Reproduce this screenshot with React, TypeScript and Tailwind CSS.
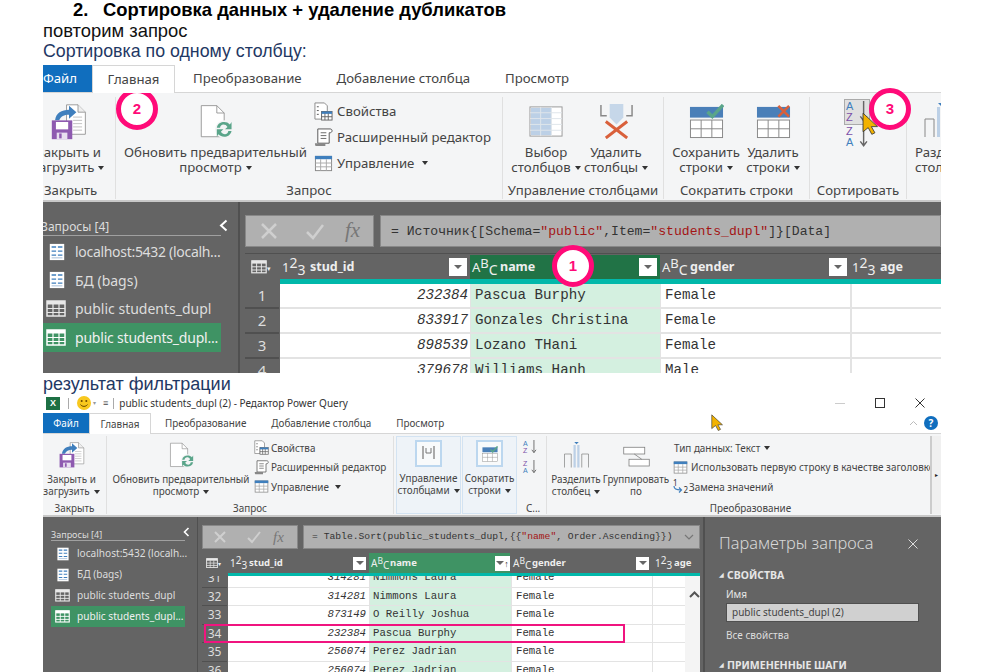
import React from "react";

type IP = { s?: number };
const SaveIcon = ({ s = 44 }: IP) => (
  <svg className="shrink-0" width={s} height={s} viewBox="0 0 44 44" fill="none">
    <path d="M19 1h14l9 9v27H19z" fill="#fff" stroke="#8a8a8a" />
    <path d="M33 1v9h9" stroke="#8a8a8a" fill="#eee" />
    <path d="M27 16h11M27 20h11M27 24h11M27 28h11M27 32h11" stroke="#b5b5b5" />
    <path d="M5 20C6 11 13 7 22 7V2l9 8-9 8v-5c-6 0-10 2-12 7z" fill="#3f7fbd" />
    <rect x="1" y="20" width="25" height="23" fill="#8e5ab0" />
    <rect x="6" y="22" width="15" height="9" fill="#fff" />
    <rect x="7" y="35" width="13" height="8" fill="#e8dff0" />
    <rect x="10" y="36" width="3" height="6" fill="#8e5ab0" />
  </svg>
);
const RefreshIcon = ({ s = 44 }: IP) => (
  <svg className="shrink-0" width={s} height={s} viewBox="0 0 44 44" fill="none">
    <path d="M4 2h19l9 9v29H4z" fill="#fff" stroke="#8a8a8a" />
    <path d="M23 2v9h9" stroke="#8a8a8a" />
    <circle cx="32" cy="31" r="11" fill="#f3f4f5" />
    <path d="M23 29c1-5 5-7 9-7 3 0 5 1 7 3l2-3v9h-8l3-3c-1-2-3-3-5-3-2 0-4 2-4 4z" fill="#5aa58a" />
    <path d="M41 33c-1 5-5 7-9 7-3 0-5-1-7-3l-2 3v-9h8l-3 3c1 2 3 3 5 3 2 0 4-2 4-4z" fill="#5aa58a" />
  </svg>
);
const PropsIcon = ({ s = 20 }: IP) => (
  <svg className="shrink-0" width={s} height={s} viewBox="0 0 20 20" fill="none">
    <path d="M1 1h10l3 3v6H8v8H1z" fill="#fff" stroke="#8a8a8a" />
    <path d="M3 5h2M3 9h2M3 13h2" stroke="#555" />
    <rect x="8" y="10" width="11" height="9" fill="#fff" stroke="#666" />
    <path d="M8 10h11v2.500H8z" fill="#3f7fbd" />
    <path d="M8 15.500h11M11.500 12v7M15 12v7" stroke="#666" />
  </svg>
);
const ScrollIcon = ({ s = 20 }: IP) => (
  <svg className="shrink-0" width={s} height={s} viewBox="0 0 20 20" fill="none">
    <path d="M4 1h13c1.500 0 2 1 2 2s-1 2-2 2h-1v11H4z" fill="#fff" stroke="#555" />
    <path d="M7 5h6M7 8h6M7 11h6" stroke="#666" />
    <path d="M1 16h11v3H2c-1 0-1-3-1-3z" fill="#888" />
  </svg>
);
const ManageIcon = ({ s = 20 }: IP) => (
  <svg className="shrink-0" width={s} height={s} viewBox="0 0 20 20" fill="none">
    <rect x="1.500" y="2.500" width="17" height="15" fill="#fff" stroke="#888" />
    <rect x="1" y="2" width="18" height="3.500" fill="#3f7fbd" />
    <path d="M1.500 9.500h17M1.500 13.500h17M7 5.500v12M13 5.500v12" stroke="#aaa" />
  </svg>
);
const ChooseIcon = ({ s = 36 }: IP) => (
  <svg className="shrink-0" width={s} height={s} viewBox="0 0 36 36" fill="none">
    <rect x="1" y="3" width="33" height="30" fill="#fff" stroke="#999" />
    <rect x="2" y="4" width="21" height="28" fill="#bcd0e6" />
    <path d="M1 9h33M1 15h33M1 21h33M1 27h33M12 3v30M23 3v30" stroke="#dfe5ea" />
  </svg>
);
const RemoveColIcon = ({ s = 36 }: IP) => (
  <svg className="shrink-0" width={s} height={s} viewBox="0 0 36 36" fill="none">
    <path d="M2 1v11h6M34 1v11h-6" stroke="#888" strokeWidth="1.500" />
    <path d="M11 0h14v14l-7 7-7-7z" fill="#c6d7e9" />
    <path d="M7 18l22 17M29 18L7 35" stroke="#d9603b" strokeWidth="3" />
  </svg>
);
const KeepIcon = ({ s = 36, x = false }: IP & { x?: boolean }) => (
  <svg className="shrink-0" width={s} height={s} viewBox="0 0 36 36" fill="none">
    <rect x="1" y="3" width="34" height="11" fill="#4a7fb8" />
    <rect x="1.500" y="16.500" width="33" height="18" fill="#fff" stroke="#888" />
    <path d="M1.500 25.500h33M12.500 16.500v18M23.500 16.500v18" stroke="#888" />
    {x ? (
      <path d="M23 2l11 11M34 2L23 13" stroke="#d9603b" strokeWidth="2.600" />
    ) : (
      <path d="M19 8l5 5 11-12" stroke="#5aa58a" strokeWidth="3.500" />
    )}
  </svg>
);
const SplitIcon = ({ s = 36 }: IP) => (
  <svg className="shrink-0" width={s} height={s} viewBox="0 0 36 36" fill="none">
    <path d="M2 34V16h9v18M34 34V16h-9v18" stroke="#888" />
    <rect x="14" y="4" width="3" height="30" fill="#bcd0e6" />
    <rect x="19" y="4" width="3" height="30" fill="#bcd0e6" />
    <path d="M15 0h6l-3 3z" fill="#3f7fbd" />
  </svg>
);
const GroupIcon = ({ s = 36 }: IP) => (
  <svg className="shrink-0" width={s} height={s} viewBox="0 0 36 30" fill="none">
    <rect x="1" y="4" width="28" height="9" fill="#fff" stroke="#777" />
    <rect x="8" y="20" width="27" height="9" fill="#fff" stroke="#777" />
    <path d="M15 13l10 7" stroke="#777" />
  </svg>
);
const SortPair = ({ down, s = 20 }: IP & { down?: boolean }) => (
  <div className="relative font-['Liberation_Sans',sans-serif]" style={{ width: s, height: s }}>
    <div className="flex flex-col items-start" style={{ fontSize: s * 0.5, lineHeight: s * 0.5 + "px" }}>
      <span className={down ? "text-[#7b4fa8]" : "text-[#3f7fbd]"}>{down ? "Z" : "A"}</span>
      <span className={down ? "text-[#3f7fbd]" : "text-[#7b4fa8]"}>{down ? "A" : "Z"}</span>
    </div>
    <svg className="absolute right-0 top-0" width={s * 0.42} height={s} viewBox="0 0 8 20" fill="none">
      <path d="M4 0v18M1 14l3 4 3-4" stroke="#666" strokeWidth="1.300" />
    </svg>
  </div>
);
const GridIcon = ({ s = 20, c = "#e8e8e8" }: IP & { c?: string }) => (
  <svg className="shrink-0" width={s} height={s * 0.85} viewBox="0 0 20 17" fill="none">
    <rect x="1" y="1" width="18" height="15" stroke={c} strokeWidth="1.500" />
    <path d="M1 1h18v3.500H1z" fill={c} />
    <path d="M1 8.500h18M1 12.500h18M7 4v12M13 4v12" stroke={c} strokeWidth="1.200" />
  </svg>
);
const ConnIcon = ({ s = 20 }: IP) => (
  <svg className="shrink-0" width={s} height={s} viewBox="0 0 20 20" fill="none">
    <rect x="2" y="1" width="16" height="18" fill="#fff" />
    <path d="M4 4.500h5M11 4.500h5M4 9h5M11 9h5M4 13.500h5M11 13.500h5" stroke="#3f7fbd" strokeWidth="1.600" />
    <path d="M4 16.500h12" stroke="#9fb9d4" />
  </svg>
);
const Smiley = () => (
  <svg className="shrink-0" width="14" height="14" viewBox="0 0 14 14">
    <circle cx="7" cy="7" r="7" fill="#f8c81e" />
    <circle cx="4.700" cy="5" r="1" fill="#6b4a00" />
    <circle cx="9.300" cy="5" r="1" fill="#6b4a00" />
    <path d="M3.500 8.500c1.500 2.500 5.500 2.500 7 0" stroke="#6b4a00" fill="none" />
  </svg>
);
const Cursor = ({ s = 22 }: IP) => (
  <svg width={s * 0.72} height={s} viewBox="0 0 16 22">
    <path d="M1 1l14 13H9l3.500 6-3 1.500L6 15l-5 4z" fill="#f2b200" stroke="#333" strokeWidth="0.800" />
  </svg>
);
const Caret = () => (
  <span className="inline-block ml-[4px] align-middle w-0 h-0 border-x-[3.500px] border-x-transparent border-t-[4px] border-t-[#333]" />
);
const Badge = ({ n, className }: { n: number; className: string }) => (
  <div
    className={
      "absolute w-[42px] h-[42px] rounded-full bg-white border-[5px] border-[#ff0a78] flex items-center justify-center text-[#ff0a78] text-[15px] font-bold font-['Liberation_Sans',sans-serif] " +
      className
    }
  >
    {n}
  </div>
);

const Tall = ({ w, icon, l1, l2, caret, iconH, gap }: { w: number; icon: React.ReactNode; l1: string; l2: string; caret?: boolean; iconH: number; gap: number }) => (
  <div className="flex flex-col items-center whitespace-nowrap shrink-0" style={{ width: w }}>
    <div className="flex items-center justify-center" style={{ height: iconH, marginBottom: gap }}>
      {icon}
    </div>
    <div>{l1}</div>
    <div>
      {l2}
      {caret && <Caret />}
    </div>
  </div>
);

const Type123 = ({ big }: { big?: boolean }) => (
  <span className={"inline-flex items-baseline shrink-0 font-normal text-[#eee] font-['Noto_Sans',sans-serif] " + (big ? "text-[13px] w-[27px]" : "text-[10px] w-[18px]")}>
    1<span className={big ? "relative -top-[4px] text-[14px]" : "relative -top-[3px] text-[10px]"}>2</span>
    <span className={big ? "relative top-[3px] text-[14px]" : "relative top-[2px] text-[10px]"}>3</span>
  </span>
);
const TypeABC = ({ big }: { big?: boolean }) => (
  <span className={"inline-flex items-baseline shrink-0 font-normal text-[#eee] font-['Noto_Sans',sans-serif] " + (big ? "text-[13px] w-[27px]" : "text-[10px] w-[18px]")}>
    A<span className={big ? "relative -top-[4px] text-[13px]" : "relative -top-[3px] text-[8.500px]"}>B</span>
    <span className={big ? "relative top-[3px] text-[14px]" : "relative top-[2px] text-[10px]"}>C</span>
  </span>
);
const Filter = ({ s, sorted }: { s: number; sorted?: boolean }) => (
  <div className="bg-white flex items-center justify-center shrink-0" style={{ width: s, height: s }}>
    <div className="w-0 h-0 border-x-[4px] border-x-transparent border-t-[4px] border-t-[#666]" />
    {sorted && <span className="text-[9px] text-[#333] leading-none">↑</span>}
  </div>
);
const HeadCell = ({ w, icon, label, bg, filter, pr }: { w: number; icon: React.ReactNode; label: string; bg: string; filter?: React.ReactNode; pr: number }) => (
  <div className={"flex items-center pl-[2px] shrink-0 h-full font-bold " + bg} style={{ width: w, paddingRight: pr }}>
    {icon}
    <span className="text-[#eee] ml-[1px] flex-1 truncate">{label}</span>
    {filter}
  </div>
);

const rows1 = [
  ["1", "232384", "Pascua Burphy", "Female"],
  ["2", "833917", "Gonzales Christina", "Female"],
  ["3", "898539", "Lozano THani", "Female"],
  ["4", "379678", "Williams Hanh", "Male"],
];
const rows2 = [
  ["31", "314281", "Nimmons Laura", "Female"],
  ["32", "314281", "Nimmons Laura", "Female"],
  ["33", "873149", "O Reilly Joshua", "Female"],
  ["34", "232384", "Pascua Burphy", "Female"],
  ["35", "256074", "Perez Jadrian", "Female"],
  ["36", "256074", "Perez Jadrian", "Female"],
];

const SideRow = ({ icon, sel, h, cls }: { icon: React.ReactNode; sel?: boolean; h: number; cls: string }) => (
  <div className={"flex items-center whitespace-nowrap " + cls + (sel ? " bg-[#3f9364]" : "")} style={{ height: h }}>
    {icon}
  </div>
);

const Shot1 = () => (
  <div className="relative w-[898px] h-[308px] ml-[43px] overflow-hidden shrink-0 text-[13.200px] text-[#444] font-['Noto_Sans',sans-serif]">
    <div className="flex h-[28px] items-stretch bg-white border-b border-[#d6d6d6]">
      <div className="w-[49px] bg-[#106ebe] text-white flex items-center">Файл</div>
      <div className="w-[83px] bg-white border-x border-t border-[#d6d6d6] -mb-px z-10 flex items-center justify-center">Главная</div>
      <div className="ml-[18px] flex items-center">Преобразование</div>
      <div className="ml-[35px] flex items-center">Добавление столбца</div>
      <div className="ml-[35px] flex items-center">Просмотр</div>
    </div>
    <div className="flex h-[107px] bg-[#f4f5f6] pt-[4px] leading-[15px]">
      <div className="w-[73px] shrink-0 flex flex-col border-r border-[#e0e0e0] mb-[1px]">
        <div className="flex-1 flex justify-center pt-[6px] -ml-[21px]">
          <Tall w={73} iconH={37} gap={5} icon={<SaveIcon s={36} />} l1="Закрыть и" l2="загрузить" caret />
        </div>
        <div className="h-[16px] pl-[1px] whitespace-nowrap">Закрыть</div>
      </div>
      <div className="w-[387px] shrink-0 flex flex-col border-r border-[#e0e0e0] mb-[1px]">
        <div className="flex-1 flex pt-[6px] pl-[8px]">
          <Tall w={183} iconH={37} gap={5} icon={<RefreshIcon s={36} />} l1="Обновить предварительный" l2="просмотр" caret />
          <div className="ml-[7px] flex flex-col gap-[6px] -mt-[2px] whitespace-nowrap">
            <div className="flex items-center gap-[4px] h-[20px]"><PropsIcon s={19} />Свойства</div>
            <div className="flex items-center gap-[4px] h-[20px]"><ScrollIcon s={19} />Расширенный редактор</div>
            <div className="flex items-center gap-[4px] h-[20px]"><ManageIcon s={19} />Управление<Caret /></div>
          </div>
        </div>
        <div className="text-center h-[16px]">Запрос</div>
      </div>
      <div className="w-[161px] shrink-0 flex flex-col border-r border-[#e0e0e0] mb-[1px]">
        <div className="flex-1 flex pt-[6px] pl-[8px]">
          <Tall w={70} iconH={37} gap={5} icon={<ChooseIcon s={35} />} l1="Выбор" l2="столбцов" caret />
          <Tall w={70} iconH={37} gap={5} icon={<RemoveColIcon s={35} />} l1="Удалить" l2="столбцы" caret />
        </div>
        <div className="text-center h-[16px] whitespace-nowrap">Управление столбцами</div>
      </div>
      <div className="w-[146px] shrink-0 flex flex-col border-r border-[#e0e0e0] mb-[1px]">
        <div className="flex-1 flex pt-[6px] pl-[8px]">
          <Tall w={68} iconH={37} gap={5} icon={<KeepIcon s={35} />} l1="Сохранить" l2="строки" caret />
          <Tall w={66} iconH={37} gap={5} icon={<KeepIcon s={35} x />} l1="Удалить" l2="строки" caret />
        </div>
        <div className="text-center h-[16px]">Сократить строки</div>
      </div>
      <div className="w-[97px] shrink-0 flex flex-col border-r border-[#e0e0e0] mb-[1px]">
        <div className="flex-1 pl-[34px] pt-[2px]">
          <div className="w-[26px] h-[26px] bg-[#e0e0e0] border border-[#aaa] flex items-center justify-center"><SortPair s={22} /></div>
          <div className="pl-[2px] mt-[1px]"><SortPair s={22} down /></div>
        </div>
        <div className="text-center h-[16px]">Сортировать</div>
      </div>
      <div className="flex-1 overflow-hidden pt-[6px] pl-[8px] whitespace-nowrap">
        <div className="h-[37px] mb-[5px] overflow-hidden pl-[8px]"><SplitIcon s={36} /></div>
        <div>Разделить</div>
        <div>столбец</div>
      </div>
    </div>
    <div className="h-[2px] bg-[#c8c8c8]" />
    <div className="flex h-[171px] bg-[#646464]">
      <div className="w-[197px] shrink-0 border-r-2 border-[#505050] pr-[17px] pt-[13px] relative">
        <div className="flex items-end h-[21px] border-b border-[#a0a0a0] text-[12px] leading-[14px] text-[#ddd] -ml-[2px] pb-[1px] whitespace-nowrap">Запросы [4]</div>
        <svg className="absolute right-[10px] top-[17px]" width="9" height="13" viewBox="0 0 9 13" fill="none"><path d="M7.500 1.500L2 6.500l5.500 5" stroke="#fff" strokeWidth="2" /></svg>
        <div className="text-[#ddd] text-[14px] mt-[1px]">
          <SideRow h={29} cls="pl-[5px]" icon={<><ConnIcon s={18} /><span className="ml-[9px] tracking-[-0.3px]">localhost:5432 (localh...</span></>} />
          <SideRow h={28} cls="pl-[5px]" icon={<><ConnIcon s={18} /><span className="ml-[9px]">БД (bags)</span></>} />
          <SideRow h={29} cls="pl-[3px]" icon={<><GridIcon s={20} /><span className="ml-[9px]">public students_dupl</span></>} />
          <SideRow h={29} sel cls="pl-[3px]" icon={<><GridIcon s={20} c="#fff" /><span className="ml-[9px] text-[#f0f0f0] tracking-[-0.2px]">public students_dupl...</span></>} />
        </div>
      </div>
      <div className="flex-1 min-w-0 overflow-hidden pl-[5px] pt-[13px]">
        <div className="flex h-[32px] gap-[6px]">
          <div className="w-[129px] bg-[#b0b0b0] border border-[#888] flex items-center shrink-0">
            <svg className="ml-[13px]" width="20" height="20" viewBox="0 0 20 20" fill="none"><path d="M3 3l14 14M17 3L3 17" stroke="#cfcfcf" strokeWidth="2.500" /></svg>
            <svg className="ml-[26px]" width="20" height="20" viewBox="0 0 20 20" fill="none"><path d="M2 11l6 6L18 4" stroke="#cfcfcf" strokeWidth="2.500" /></svg>
            <span className="ml-[20px] font-['Liberation_Serif',serif] italic text-[21px] text-[#777]">fx</span>
          </div>
          <div className="flex-1 bg-[#b0b0b0] border border-[#888] flex items-center pl-[10px] pt-[1px] font-['Liberation_Mono',monospace] text-[13.100px] text-[#333] whitespace-nowrap">
            <span>= Источник{"{"}[Schema=<span className="text-[#a31515]">"public"</span>,Item=<span className="text-[#a31515]">"students_dupl"</span>]{"}"}[Data]</span>
          </div>
        </div>
        <div className="flex h-[26px] mt-[6px] pt-px text-[12.500px] bg-[#646464] border-t border-[#505050]">
          <div className="w-[35px] shrink-0 flex items-center pl-[6px] text-[#eee]"><GridIcon s={16} /><span className="text-[7px] mt-[4px]">▾</span></div>
          <HeadCell w={190} bg="bg-[#646464]" pr={3} icon={<Type123 big />} label="stud_id" filter={<Filter s={18} />} />
          <HeadCell w={190} bg="bg-[#217346]" pr={3} icon={<TypeABC big />} label="name" filter={<Filter s={18} />} />
          <div className="w-px" />
          <HeadCell w={190} bg="bg-[#646464]" pr={3} icon={<TypeABC big />} label="gender" filter={<Filter s={18} />} />
          <div className="w-px" />
          <HeadCell w={100} bg="bg-[#646464]" pr={3} icon={<Type123 big />} label="age" />
        </div>
        <div className="flex h-[5px]"><div className="w-[35px] shrink-0" /><div className="flex-1 bg-[#01b8aa]" /></div>
        {rows1.map((r) => (
          <div key={r[0]} className="flex h-[25px] font-['Liberation_Mono',monospace] text-[14.200px] text-[#333] leading-[23px]">
            <div className="w-[34px] mr-px shrink-0 bg-[#646464] border-b-2 border-[#505050] text-[#ddd] text-center text-[15px] font-['Noto_Sans',sans-serif]">{r[0]}</div>
            <div className="w-[190px] shrink-0 bg-white border-b-2 border-[#e3e3e3] text-right pr-[2px] italic">{r[1]}</div>
            <div className="w-[191px] shrink-0 bg-[#d4f0e0] border-b-2 border-x border-[#e3e3e3] pl-[4px]">{r[2]}</div>
            <div className="w-[191px] shrink-0 bg-white border-b-2 border-r-2 border-[#e3e3e3] pl-[4px]">{r[3]}</div>
            <div className="flex-1 bg-white border-b-2 border-[#e3e3e3]" />
          </div>
        ))}
      </div>
    </div>
    <Badge n={2} className="left-[73px] top-[23px]" />
    <Badge n={3} className="left-[826px] top-[23px]" />
    <Badge n={1} className="left-[509px] top-[180px]" />
    <div className="absolute left-[819px] top-[47px]"><Cursor s={23} /></div>
  </div>
);

const Shot2 = () => (
  <div className="relative w-[898px] h-[279px] ml-[43px] overflow-hidden shrink-0 text-[9.900px] text-[#444] font-['Noto_Sans',sans-serif]">
    <div className="flex items-center h-[20px] pl-[3px] text-[10px] text-[#333]">
      <div className="w-[14px] h-[13px] bg-[#1d7044] text-white font-bold text-[9px] leading-[13px] text-center font-['Liberation_Sans',sans-serif]">X</div>
      <div className="ml-[8px] w-px h-[11px] bg-[#aaa]" />
      <div className="ml-[8px]"><Smiley /></div>
      <span className="ml-[2px] text-[6px] text-[#999]">▾</span>
      <span className="ml-[7px] text-[9px] text-[#444]">≡</span>
      <div className="ml-[5px] w-px h-[11px] bg-[#aaa]" />
      <span className="ml-[5px]">public students_dupl (2) - Редактор Power Query</span>
      <div className="flex-1" />
      <div className="w-[10px] h-px bg-[#ccc]" />
      <div className="ml-[30px] w-[10px] h-[10px] border border-[#333]" />
      <svg className="ml-[30px] mr-[16px]" width="10" height="10" viewBox="0 0 10 10" fill="none"><path d="M.5.500l9 9M9.500.500l-9 9" stroke="#333" /></svg>
    </div>
    <div className="flex h-[21px] items-stretch bg-white border-b border-[#d6d6d6]">
      <div className="w-[46px] bg-[#106ebe] text-white flex items-center justify-center">Файл</div>
      <div className="w-[62px] bg-white border-x border-t border-[#d6d6d6] -mb-px z-10 flex items-center justify-center">Главная</div>
      <div className="ml-[14px] flex items-center">Преобразование</div>
      <div className="ml-[25px] flex items-center">Добавление столбца</div>
      <div className="ml-[25px] flex items-center">Просмотр</div>
      <div className="flex-1" />
      <svg className="self-center" width="9" height="6" viewBox="0 0 9 6" fill="none"><path d="M1 5l3.500-3.500L8 5" stroke="#bbb" /></svg>
      <div className="self-center ml-[6px] mr-[3px] w-[14px] h-[14px] rounded-full bg-[#106ebe] text-white text-[10px] font-bold leading-[14px] text-center">?</div>
    </div>
    <div className="flex h-[81px] bg-[#f4f5f6] pt-[2px] leading-[12px]">
      <div className="w-[64px] shrink-0 flex flex-col border-r border-[#e0e0e0] mb-[1px]">
        <div className="flex-1 pt-[5px] -ml-[3px]">
          <Tall w={63} iconH={28} gap={4} icon={<SaveIcon s={26} />} l1="Закрыть и" l2="загрузить" caret />
        </div>
        <div className="text-center h-[12px]">Закрыть</div>
      </div>
      <div className="w-[287px] shrink-0 flex flex-col border-r border-[#e0e0e0] mb-[1px]">
        <div className="flex-1 flex pt-[5px] pl-[6px]">
          <Tall w={136} iconH={28} gap={4} icon={<RefreshIcon s={27} />} l1="Обновить предварительный" l2="просмотр" caret />
          <div className="ml-[5px] flex flex-col gap-[4.500px] -mt-[1px] whitespace-nowrap">
            <div className="flex items-center gap-[2px] h-[15px]"><PropsIcon s={15} />Свойства</div>
            <div className="flex items-center gap-[2px] h-[15px]"><ScrollIcon s={15} />Расширенный редактор</div>
            <div className="flex items-center gap-[2px] h-[15px]"><ManageIcon s={15} />Управление<Caret /></div>
          </div>
        </div>
        <div className="text-center h-[12px]">Запрос</div>
      </div>
      <div className="w-[65px] ml-[2px] shrink-0 flex flex-col bg-[#eef3f8] border border-[#d3e3f2] mb-[1px] items-center whitespace-nowrap pt-[3px]">
        <div className="w-[27px] h-[27px] border-2 border-[#bcd7ef] bg-[#f8fafb] flex items-center justify-center mb-[5px]">
          <svg width="15" height="15" viewBox="0 0 15 15" fill="none"><path d="M1 0v13h2V0zM12 0v13h2V0z" fill="#aaa" /><path d="M5 2v5h5V2" stroke="#777" /></svg>
        </div>
        <div>Управление</div>
        <div>столбцами<Caret /></div>
      </div>
      <div className="w-[55px] ml-[1px] shrink-0 flex flex-col bg-[#eef3f8] border border-[#d3e3f2] mb-[1px] items-center whitespace-nowrap pt-[3px]">
        <div className="w-[27px] h-[27px] border-2 border-[#bcd7ef] bg-[#f8fafb] flex items-center justify-center mb-[5px]"><KeepIcon s={16} /></div>
        <div>Сократить</div>
        <div>строки<Caret /></div>
      </div>
      <div className="w-[30px] shrink-0 flex flex-col border-r border-[#e0e0e0] mb-[1px] pl-[6px]">
        <div className="flex-1 pt-[4px] flex flex-col gap-[6px]"><SortPair s={14} /><SortPair s={14} down /></div>
        <div className="h-[12px] pl-[3px]">С...</div>
      </div>
      <div className="flex-1 min-w-0 flex flex-col overflow-hidden mb-[1px]">
        <div className="flex-1 flex pt-[5px] pl-[3px] whitespace-nowrap">
          <Tall w={52} iconH={28} gap={4} icon={<SplitIcon s={27} />} l1="Разделить" l2="столбец" caret />
          <Tall w={68} iconH={28} gap={4} icon={<GroupIcon s={27} />} l1="Группировать" l2="по" />
          <div className="ml-[3px] flex flex-col gap-[4.500px] -mt-[1px]">
            <div className="flex items-center h-[15px] pl-[1px]">Тип данных: Текст<Caret /></div>
            <div className="flex items-center gap-[3px] h-[15px]"><ManageIcon s={15} />Использовать первую строку в качестве заголовков</div>
            <div className="flex items-center gap-[1px] h-[15px]">
              <span className="relative w-[15px] h-[15px] shrink-0 text-[8px] leading-[8px] text-[#3f7fbd]">
                <span className="absolute left-0 top-0 text-[#333]">1</span>
                <span className="absolute right-0 bottom-0 text-[#333]">2</span>
                <svg className="absolute left-0 top-[7px]" width="10" height="7" viewBox="0 0 10 7" fill="none"><path d="M1 0c0 3 2 4 7 4M6 1.500L8.500 4 6 6.500" stroke="#3f7fbd" strokeWidth="1.200" /></svg>
              </span>
              Замена значений
            </div>
          </div>
        </div>
        <div className="text-center h-[12px] pl-[24px]">Преобразование</div>
      </div>
      <div className="w-[11px] shrink-0 bg-[#f0f0f0] border-l-2 border-[#ccc] flex items-center justify-center text-[6px] text-[#222] mb-[1px]">▸</div>
    </div>
    <div className="h-[2px] bg-[#c8c8c8]" />
    <div className="flex h-[155px] bg-[#646464]">
      <div className="w-[155px] shrink-0 border-r border-[#505050] pl-[8px] pr-[12px] pt-[10px] relative">
        <div className="flex items-end h-[14px] border-b border-[#a0a0a0] text-[9px] leading-[11px] text-[#ddd] whitespace-nowrap">Запросы [4]</div>
        <svg className="absolute right-[7px] top-[10px]" width="7" height="10" viewBox="0 0 7 10" fill="none"><path d="M5.500 1L1.500 5l4 4" stroke="#fff" strokeWidth="1.600" /></svg>
        <div className="text-[#ddd] text-[10.100px] mt-[2px]">
          <SideRow h={21} cls="pl-[5px]" icon={<><ConnIcon s={14} /><span className="ml-[7px]">localhost:5432 (localh...</span></>} />
          <SideRow h={21} cls="pl-[5px]" icon={<><ConnIcon s={14} /><span className="ml-[7px]">БД (bags)</span></>} />
          <SideRow h={21} cls="pl-[4px]" icon={<><GridIcon s={15} /><span className="ml-[7px]">public students_dupl</span></>} />
          <SideRow h={21} sel cls="pl-[4px]" icon={<><GridIcon s={15} c="#fff" /><span className="ml-[7px] text-[#f0f0f0]">public students_dupl...</span></>} />
        </div>
      </div>
      <div className="w-[507px] shrink-0 overflow-hidden border-r-2 border-[#505050] pl-[4px] pt-[8px] pr-[3px] relative">
        <div className="flex h-[24px] gap-[5px]">
          <div className="w-[96px] bg-[#b0b0b0] border border-[#888] flex items-center shrink-0">
            <svg className="ml-[10px]" width="14" height="14" viewBox="0 0 14 14" fill="none"><path d="M2 2l10 10M12 2L2 12" stroke="#cfcfcf" strokeWidth="2" /></svg>
            <svg className="ml-[20px]" width="14" height="14" viewBox="0 0 14 14" fill="none"><path d="M1 8l4 4 8-10" stroke="#cfcfcf" strokeWidth="2" /></svg>
            <span className="ml-[12px] font-['Liberation_Serif',serif] italic text-[15px] text-[#777]">fx</span>
          </div>
          <div className="flex-1 min-w-0 bg-[#b0b0b0] border border-[#888] flex items-center pl-[8px] font-['Liberation_Mono',monospace] text-[9.700px] text-[#333] whitespace-nowrap">
            <span className="flex-1">= Table.Sort(public_students_dupl,{"{{"}<span className="text-[#a31515]">"name"</span>, Order.Ascending{"}})"}</span>
            <svg className="mr-[5px]" width="10" height="6" viewBox="0 0 10 6" fill="none"><path d="M1 1l4 4 4-4" stroke="#777" strokeWidth="1.200" /></svg>
          </div>
        </div>
        <div className="flex h-[20px] mt-[4px] text-[9.500px]">
          <div className="w-[26px] shrink-0 flex items-center pl-[4px]"><GridIcon s={12} /><span className="text-[6px] text-[#eee] mt-[3px]">▾</span></div>
          <HeadCell w={141} bg="bg-[#646464]" pr={3} icon={<Type123 />} label="stud_id" filter={<Filter s={13} />} />
          <HeadCell w={141} bg="bg-[#3f9364]" pr={0} icon={<TypeABC />} label="name" filter={<Filter s={15} sorted />} />
          <div className="w-px" />
          <HeadCell w={141} bg="bg-[#646464]" pr={3} icon={<TypeABC />} label="gender" filter={<Filter s={13} />} />
          <div className="w-px" />
          <HeadCell w={47} bg="bg-[#646464]" pr={0} icon={<Type123 />} label="age" />
        </div>
        <div className="flex h-[3px] relative z-10"><div className="w-[26px] shrink-0 bg-[#646464]" /><div className="flex-1 bg-[#01b8aa]" /></div>
        <div className="h-[100px] overflow-hidden">
          <div className="-mt-[7px]">
            {rows2.map((r) => (
              <div key={r[0]} className="flex h-[18.600px] font-['Liberation_Mono',monospace] text-[10.700px] text-[#333] leading-[17px]">
                <div className="w-[25px] mr-px shrink-0 bg-[#646464] border-b border-[#505050] text-[#ddd] text-center text-[12px] font-['Noto_Sans',sans-serif]">{r[0]}</div>
                <div className="w-[141px] shrink-0 bg-white border-b border-[#e3e3e3] text-right pr-[3px] italic">{r[1]}</div>
                <div className="w-[142px] shrink-0 bg-[#d4f0e0] border-b border-l border-[#e3e3e3] pl-[3px]">{r[2]}</div>
                <div className="w-[142px] shrink-0 bg-white border-b border-x border-[#e3e3e3] pl-[4px]">{r[3]}</div>
                <div className="w-[32px] shrink-0 bg-white border-b border-[#e3e3e3]" />
                <div className="flex-1 bg-[#f4f4f4]" />
              </div>
            ))}
          </div>
        </div>
        <svg className="absolute left-[491px] top-[74px]" width="11" height="7" viewBox="0 0 11 7" fill="none"><path d="M1 6l4.500-4.500L10 6" stroke="#555" strokeWidth="2" /></svg>
      </div>
      <div className="flex-1 pl-[14px] pr-[23px] text-[#e6e6e6] min-w-0">
        <div className="flex items-center justify-between h-[36px] pt-[17px] text-[16.400px] text-[#d8d8d8] font-light">
          <span className="whitespace-nowrap">Параметры запроса</span>
          <svg width="10" height="10" viewBox="0 0 10 10" fill="none"><path d="M.5.500l9 9M9.500.500l-9 9" stroke="#ddd" /></svg>
        </div>
        <div className="mt-[15px] text-[10.500px] font-bold flex items-center gap-[3px] h-[15px]"><span className="text-[6px]">◢</span>СВОЙСТВА</div>
        <div className="ml-[7px] mt-[4px] text-[10px] h-[14px]">Имя</div>
        <div className="ml-[7px] -mr-[1px] mt-[2px] h-[19px] bg-[#d0d0d0] border border-[#505050] text-[10px] text-[#444] flex items-center pl-[5px] whitespace-nowrap">public students_dupl (2)</div>
        <div className="ml-[7px] mt-[6px] text-[10px] text-[#ddd]">Все свойства</div>
        <div className="mt-[15px] text-[10.500px] font-bold flex items-center gap-[3px] h-[15px] whitespace-nowrap"><span className="text-[6px]">◢</span>ПРИМЕНЕННЫЕ ШАГИ</div>
      </div>
    </div>
    <div className="absolute left-[161px] top-[231px] w-[421px] h-[19px] border-2 border-[#f0147f]" />
    <div className="absolute left-[668px] top-[21px]"><Cursor s={17} /></div>
  </div>
);

export default function App() {
  return (
    <div className="w-[983px] h-[672px] overflow-hidden bg-white flex flex-col font-['Liberation_Sans',sans-serif]">
      <div className="h-[20px] shrink-0 pl-[73px] text-[18.400px] leading-[19px] font-bold text-black flex whitespace-nowrap">
        <span className="w-[30px]">2.</span>
        <span>Сортировка данных + удаление дубликатов</span>
      </div>
      <div className="h-[21px] shrink-0 pl-[43px] text-[18.400px] leading-[21px] text-[#111]">повторим запрос</div>
      <div className="h-[21px] shrink-0 pl-[43px] text-[17.800px] leading-[21px] text-[#1f3864]">Сортировка по одному столбцу:</div>
      <div className="h-[3px] shrink-0" />
      <Shot1 />
      <div className="h-[20px] pl-[43px] text-[18px] leading-[22px] text-[#1f3864] shrink-0 whitespace-nowrap">результат фильтрации</div>
      <Shot2 />
    </div>
  );
}
